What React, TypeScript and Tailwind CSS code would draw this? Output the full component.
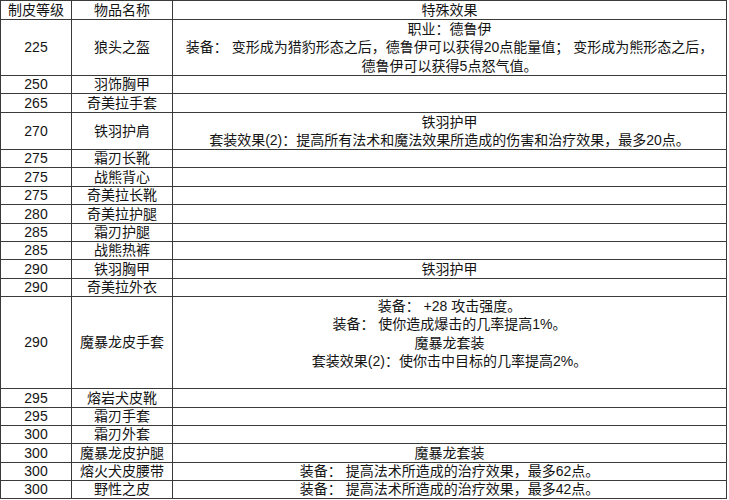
type Row = {
  level: string;
  name: string;
  h: string;
  effect: string[];
  top?: boolean;
};

const rows: Row[] = [
  {
    level: "225",
    name: "狼头之盔",
    h: "h-[56px]",
    effect: [
      "职业：德鲁伊",
      "装备： 变形成为猎豹形态之后，德鲁伊可以获得20点能量值； 变形成为熊形态之后，",
      "德鲁伊可以获得5点怒气值。",
    ],
  },
  { level: "250", name: "羽饰胸甲", h: "h-[18px]", effect: [] },
  { level: "265", name: "奇美拉手套", h: "h-[19px]", effect: [] },
  {
    level: "270",
    name: "铁羽护肩",
    h: "h-[37px]",
    effect: ["铁羽护甲", "套装效果(2)：提高所有法术和魔法效果所造成的伤害和治疗效果，最多20点。"],
  },
  { level: "275", name: "霜刃长靴", h: "h-[18px]", effect: [] },
  { level: "275", name: "战熊背心", h: "h-[19px]", effect: [] },
  { level: "275", name: "奇美拉长靴", h: "h-[18px]", effect: [] },
  { level: "280", name: "奇美拉护腿", h: "h-[19px]", effect: [] },
  { level: "285", name: "霜刃护腿", h: "h-[18px]", effect: [] },
  { level: "285", name: "战熊热裤", h: "h-[18px]", effect: [] },
  { level: "290", name: "铁羽胸甲", h: "h-[19px]", effect: ["铁羽护甲"] },
  { level: "290", name: "奇美拉外衣", h: "h-[18px]", effect: [] },
  {
    level: "290",
    name: "魔暴龙皮手套",
    h: "h-[92px]",
    top: true,
    effect: [
      "装备： +28 攻击强度。",
      "装备： 使你造成爆击的几率提高1%。",
      "魔暴龙套装",
      "套装效果(2)：使你击中目标的几率提高2%。",
    ],
  },
  { level: "295", name: "熔岩犬皮靴", h: "h-[19px]", effect: [] },
  { level: "295", name: "霜刃手套", h: "h-[18px]", effect: [] },
  { level: "300", name: "霜刃外套", h: "h-[18px]", effect: [] },
  { level: "300", name: "魔暴龙皮护腿", h: "h-[19px]", effect: ["魔暴龙套装"] },
  {
    level: "300",
    name: "熔火犬皮腰带",
    h: "h-[18px]",
    effect: ["装备： 提高法术所造成的治疗效果，最多62点。"],
  },
  {
    level: "300",
    name: "野性之皮",
    h: "h-[18px]",
    effect: ["装备： 提高法术所造成的治疗效果，最多42点。"],
  },
];

const cell = "border-r border-b border-[#3a3a3a] flex items-center justify-center";

export default function App() {
  return (
    <div className="w-[729px] h-[500px] bg-white text-[#141414] text-[14px] leading-[18.4px] font-['Liberation_Sans','Noto_Sans_CJK_SC',sans-serif]">
      <div className="w-[727px] border-l border-t border-[#3a3a3a]">
        <div className="flex h-[19px]">
          <div className={`${cell} w-[71px]`}>制皮等级</div>
          <div className={`${cell} w-[101px]`}>物品名称</div>
          <div className={`${cell} w-[554px]`}>特殊效果</div>
        </div>
        {rows.map((r, i) => (
          <div key={i} className={`flex ${r.h}`}>
            <div className={`${cell} w-[71px]`}>{r.level}</div>
            <div className={`${cell} w-[101px] whitespace-nowrap`}>{r.name}</div>
            <div
              className={`border-r border-b border-[#3a3a3a] w-[554px] flex flex-col items-center whitespace-nowrap ${
                r.top ? "justify-start" : "justify-center"
              }`}
            >
              {r.effect.map((line, j) => (
                <span key={j}>{line}</span>
              ))}
            </div>
          </div>
        ))}
      </div>
    </div>
  );
}
